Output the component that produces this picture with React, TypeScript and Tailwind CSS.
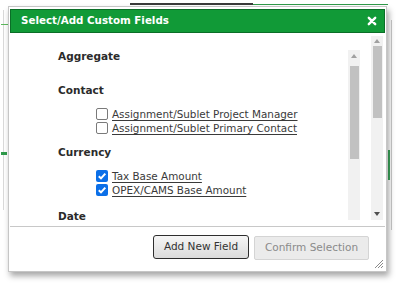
import React from "react";

const groups = [
  { title: "Aggregate", items: [] as { label: string; checked: boolean }[], gap: "mt-0" },
  {
    title: "Contact",
    gap: "mt-[18px]",
    items: [
      { label: "Assignment/Sublet Project Manager", checked: false },
      { label: "Assignment/Sublet Primary Contact", checked: false },
    ],
  },
  {
    title: "Currency",
    gap: "mt-[9px]",
    items: [
      { label: "Tax Base Amount", checked: true },
      { label: "OPEX/CAMS Base Amount", checked: true },
    ],
  },
  { title: "Date", items: [], gap: "mt-[11px]" },
];

function Box({ checked }: { checked: boolean }) {
  if (checked) {
    return (
      <span className="flex h-[12px] w-[12px] items-center justify-center rounded-[2px] bg-[#0b6fe8]">
        <svg width="10" height="10" viewBox="0 0 10 10">
          <path d="M1.8 5.2 L4 7.4 L8.3 2.6" fill="none" stroke="white" strokeWidth="2" />
        </svg>
      </span>
    );
  }
  return <span className="block h-[12px] w-[12px] rounded-[2px] border border-[#7a7a7a] bg-white" />;
}

function UpArrow() {
  return (
    <svg width="6" height="4" viewBox="0 0 6 4" className="mx-auto">
      <path d="M0 4 L3 0 L6 4 Z" fill="#a0a0a0" />
    </svg>
  );
}

function DownArrow() {
  return (
    <svg width="6" height="4" viewBox="0 0 6 4" className="mx-auto">
      <path d="M0 0 L3 4 L6 0 Z" fill="#505050" />
    </svg>
  );
}

export default function App() {
  return (
    <div
      className="relative h-[285px] w-[401px] overflow-hidden bg-white pl-[8px] pt-[6px] text-[#333]"
      style={{ fontFamily: '"DejaVu Sans", Verdana, sans-serif' }}
    >
      {/* page behind the dialog */}
      <div className="absolute left-[130px] top-[3px] h-[2px] w-[123px] bg-[#3a3a3a]" />
      <div className="absolute left-[253px] top-[4px] h-[1px] w-[135px] bg-[#2f9a4a]" />
      <div className="absolute left-[3px] top-[10px] h-[200px] w-[1px] bg-[#d9d9d9]" />
      <div className="absolute left-[1px] top-[24px] h-[1px] w-[7px] bg-[#5cb85c]" />
      <div className="absolute left-[1px] top-[152px] h-[3px] w-[6px] bg-[#2f9a4a]" />
      <div className="absolute left-[388px] top-[150px] h-[30px] w-[2px] bg-[#3aa55a]" />
      <div className="absolute left-[391px] top-[20px] h-[210px] w-[1px] bg-[#c9c9c9]" />

      <div className="relative flex h-[266px] w-[379px] flex-col border border-[#c6c6c6] bg-white px-[1px] pt-[2px] shadow-[2px_4px_6px_rgba(0,0,0,0.35)]">
        {/* title */}
        <div className="flex h-[24px] items-center justify-between border border-[#0b6e27] bg-[#119a37] pl-[10px] pr-[7px]">
          <span className="text-[10.3px] font-bold text-white">Select/Add Custom Fields</span>
          <svg width="10" height="10" viewBox="0 0 10 10">
            <path d="M1.8 1.8 L8.2 8.2 M8.2 1.8 L1.8 8.2" stroke="white" strokeWidth="2.4" strokeLinecap="round" />
          </svg>
        </div>

        {/* body */}
        <div className="flex h-[193px] items-start overflow-hidden">
          <div className="flex flex-1 items-start">
            <div className="flex-1 pl-[48px] pt-[15px]">
              {groups.map((g) => (
                <div key={g.title} className={g.gap}>
                  <div className="h-[16px] text-[10.5px] font-bold leading-[16px] text-[#2b2b2b]">{g.title}</div>
                  {g.items.length > 0 && (
                    <div className="mt-[9px] pl-[38px]">
                      {g.items.map((it) => (
                        <div key={it.label} className="flex h-[14px] items-center gap-[4px]">
                          <Box checked={it.checked} />
                          <span className="text-[10.4px] leading-[14px] text-[#3a3a3a] underline underline-offset-[2px]">
                            {it.label}
                          </span>
                        </div>
                      ))}
                    </div>
                  )}
                </div>
              ))}
            </div>
            {/* inner scrollbar */}
            <div className="mt-[17px] flex h-[170px] w-[12px] flex-col bg-[#f1f1f1] pt-[4px]">
              <UpArrow />
              <div className="mx-auto mt-[8px] h-[93px] w-[9px] bg-[#c1c1c1]" />
            </div>
          </div>
          {/* outer scrollbar */}
          <div className="ml-[11px] mr-[2px] mt-[3px] flex h-[184px] w-[12px] flex-col bg-[#f1f1f1] pb-[4px] pt-[3px]">
            <UpArrow />
            <div className="mx-auto mt-[3px] h-[72px] w-[9px] bg-[#c1c1c1]" />
            <div className="flex-1" />
            <DownArrow />
          </div>
        </div>

        {/* footer */}
        <div className="relative flex h-[45px] items-start justify-end gap-[5px] border-t border-[#c8c8c8] pr-[16px] pt-[8px]">
          <button className="h-[24px] w-[96px] rounded-[3px] border border-[#2e2e2e] bg-gradient-to-b from-[#f6f6f6] to-[#dcdcdc] text-[10.5px] text-[#333]">
            Add New Field
          </button>
          <button className="mt-[1px] h-[24px] w-[115px] rounded-[2px] border border-[#d4d4d4] bg-[#ebebeb] text-[10.5px] text-[#8a8a8a]">
            Confirm Selection
          </button>
          <svg width="11" height="11" viewBox="0 0 11 11" className="absolute bottom-[2px] right-[1px]">
            <path d="M10 2 L2 10 M10 5 L5 10 M10 8 L8 10" stroke="#8a8a8a" strokeWidth="1" />
          </svg>
        </div>
      </div>
    </div>
  );
}
